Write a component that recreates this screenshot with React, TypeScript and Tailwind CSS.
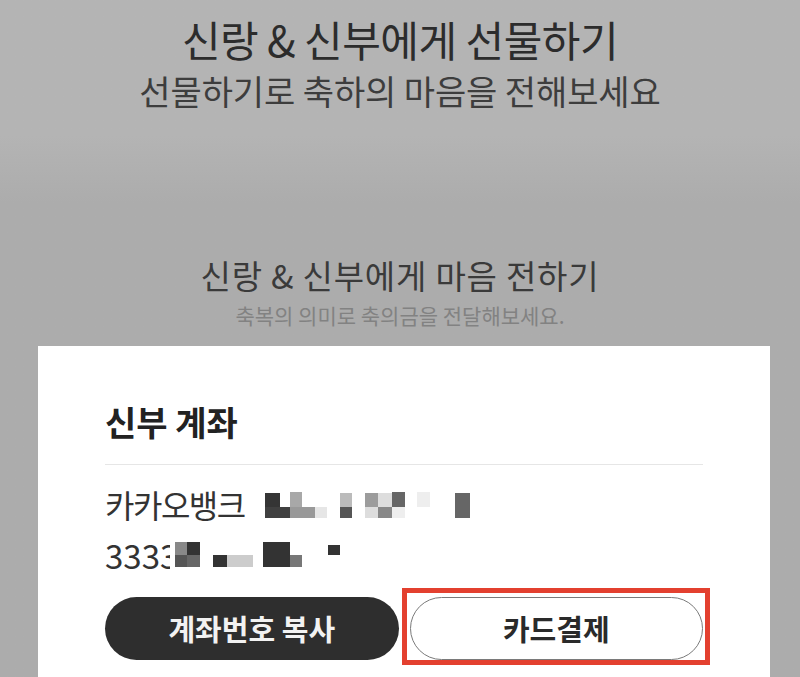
const font = { fontFamily: '"Noto Sans CJK KR", "Noto Sans", sans-serif' };

function MosaicBank() {
  return (
    <svg className="absolute left-0 top-0" width="600" height="36" viewBox="0 0 600 36">
      <rect x="160" y="7" width="15" height="25" fill="#353535" />
      <rect x="160" y="21" width="25" height="11" fill="#404040" />
      <rect x="185" y="6" width="12" height="15" fill="#a8a8a8" />
      <rect x="185" y="21" width="25" height="11" fill="#999999" />
      <rect x="210" y="21" width="12" height="11" fill="#e6e6e6" />
      <rect x="235" y="7" width="12" height="14" fill="#bbbbbb" />
      <rect x="235" y="21" width="12" height="11" fill="#555555" />
      <rect x="260" y="7" width="13" height="14" fill="#9c9c9c" />
      <rect x="273" y="7" width="14" height="14" fill="#dddddd" />
      <rect x="287" y="6" width="13" height="15" fill="#666666" />
      <rect x="260" y="21" width="13" height="11" fill="#dddddd" />
      <rect x="273" y="21" width="14" height="11" fill="#888888" />
      <rect x="287" y="21" width="13" height="11" fill="#eeeeee" />
      <rect x="312" y="6" width="13" height="15" fill="#eeeeee" />
      <rect x="350" y="7" width="15" height="25" fill="#666666" />
    </svg>
  );
}

function MosaicNumber() {
  return (
    <svg className="absolute left-0 top-0" width="600" height="36" viewBox="0 0 600 36">
      <rect x="65" y="0" width="12" height="36" fill="#ffffff" />
      <rect x="70" y="5" width="12" height="13" fill="#888888" />
      <rect x="82" y="5" width="13" height="13" fill="#333333" />
      <rect x="70" y="18" width="12" height="12" fill="#555555" />
      <rect x="82" y="18" width="13" height="12" fill="#666666" />
      <rect x="108" y="18" width="14" height="12" fill="#333333" />
      <rect x="122" y="18" width="26" height="12" fill="#cccccc" />
      <rect x="158" y="5" width="27" height="25" fill="#333333" />
      <rect x="185" y="18" width="12" height="12" fill="#777777" />
      <rect x="223" y="8" width="12" height="10" fill="#333333" />
    </svg>
  );
}

export default function App() {
  return (
    <div
      className="flex h-[677px] flex-col overflow-hidden bg-linear-to-b from-[#b4b4b4] from-20% to-[#acacac] to-30%"
      style={font}
    >
      <div className="flex flex-col items-center pt-[15px]">
        <h1 className="text-[42px] leading-[48px] font-normal tracking-[-0.5px] text-[#2c2c2c]">
          신랑 &amp; 신부에게 선물하기
        </h1>
        <p className="mt-[8px] text-[34px] leading-[40px] tracking-[-0.1px] text-[#3d3d3d]">
          선물하기로 축하의 마음을 전해보세요
        </p>
      </div>

      <div className="mt-[144px] flex flex-col items-center">
        <h2 className="text-[33px] leading-[40px] font-normal tracking-[0.8px] text-[#3a3a3a]">
          신랑 &amp; 신부에게 마음 전하기
        </h2>
        <p className="mt-[6px] text-[21px] leading-[28px] text-[#828282]">
          축복의 의미로 축의금을 전달해보세요.
        </p>
      </div>

      <div className="mt-[17px] ml-[38px] mr-[30px] flex-1 bg-white px-[67px] pt-[56px]">
        <h3 className="text-[34px] leading-[40px] font-bold text-[#222]">신부 계좌</h3>
        <div className="mt-[22px] h-px w-full bg-[#e6e6e6]" />
        <div className="relative mt-[21px] text-[32px] leading-[36px] tracking-[-1.5px] text-[#333]">
          카카오뱅크
          <MosaicBank />
        </div>
        <div className="relative mt-[15px] text-[33px] leading-[36px] text-[#333]">
          3333
          <MosaicNumber />
        </div>
        <div className="mt-[24px] flex gap-[11px]">
          <button className="h-[63px] flex-1 rounded-full bg-[#2e2e2e] text-[29px] font-bold text-[#f2f2f2]">
            계좌번호 복사
          </button>
          <div className="relative flex-1">
            <button className="h-[63px] w-full rounded-full border-[1.5px] border-[#7a7a7a] bg-white text-[29px] font-bold text-[#2a2a2a]">
              카드결제
            </button>
            <div className="pointer-events-none absolute -top-[9px] -bottom-[5px] -left-[8px] -right-[7px] border-[5px] border-[#e3402f]" />
          </div>
        </div>
      </div>
    </div>
  );
}
